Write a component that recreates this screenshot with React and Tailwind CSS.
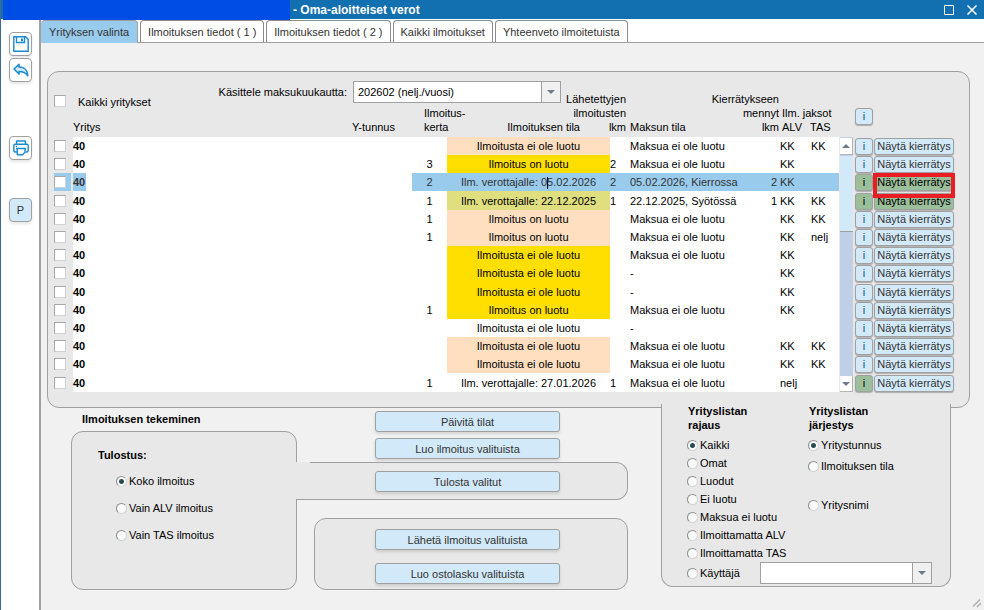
import React from "react";

const none = "Ilmoitusta ei ole luotu";
const made = "Ilmoitus on luotu";
const unpaid = "Maksua ei ole luotu";

const rows = [
  { kerta: "", tila: none, tone: "peach", lkm: "", maksu: unpaid, n: "", alv: "KK", tas: "KK" },
  { kerta: "3", tila: made, tone: "yellow", lkm: "2", maksu: unpaid, n: "", alv: "KK", tas: "" },
  { kerta: "2", tila: "", tone: "selected", lkm: "2", maksu: "05.02.2026, Kierrossa", n: "2", alv: "KK", tas: "", selected: true, info: true, green: true },
  { kerta: "1", tila: "Ilm. verottajalle: 22.12.2025", tone: "olive", lkm: "1", maksu: "22.12.2025, Syötössä", n: "1", alv: "KK", tas: "KK", info: true, green: true },
  { kerta: "1", tila: made, tone: "peach", lkm: "", maksu: unpaid, n: "", alv: "KK", tas: "KK" },
  { kerta: "1", tila: made, tone: "peach", lkm: "", maksu: unpaid, n: "", alv: "KK", tas: "nelj" },
  { kerta: "", tila: none, tone: "yellow", lkm: "", maksu: unpaid, n: "", alv: "KK", tas: "" },
  { kerta: "", tila: none, tone: "yellow", lkm: "", maksu: "-", n: "", alv: "KK", tas: "" },
  { kerta: "", tila: none, tone: "yellow", lkm: "", maksu: "-", n: "", alv: "KK", tas: "" },
  { kerta: "1", tila: made, tone: "yellow", lkm: "", maksu: unpaid, n: "", alv: "KK", tas: "" },
  { kerta: "", tila: none, tone: "plain", lkm: "", maksu: "-", n: "", alv: "", tas: "" },
  { kerta: "", tila: none, tone: "peach", lkm: "", maksu: unpaid, n: "", alv: "KK", tas: "KK" },
  { kerta: "", tila: none, tone: "peach", lkm: "", maksu: unpaid, n: "", alv: "KK", tas: "KK" },
  { kerta: "1", tila: "Ilm. verottajalle: 27.01.2026", tone: "plain", lkm: "1", maksu: unpaid, n: "", alv: "nelj", tas: "", info: true },
];

const tones = {
  peach: "bg-[#ffdfc0]",
  yellow: "bg-[#ffdf00]",
  olive: "bg-[#dfdf80]",
  selected: "bg-[#99cbec]",
  plain: "bg-white",
};

const checkboxStyle =
  "block size-3 appearance-none border border-t-[#a8a8a8] border-l-[#a8a8a8] border-r-[#cfd2da] border-b-[#cfd2da] bg-white checked:bg-[#2a8fd0]";

function Arrow({ up }) {
  return (
    <svg viewBox="0 0 8 4" className="h-1 w-2" aria-hidden="true">
      <path d={up ? "M0 4L4 0L8 4Z" : "M0 0H8L4 4Z"} fill="#6f7b8c" />
    </svg>
  );
}

function Dropdown({ id, label, className, children }) {
  return (
    <div className={`relative ${className}`}>
      <select
        id={id}
        aria-label={label}
        className="block h-[22px] w-full appearance-none border border-[#a0a0a0] bg-white pr-5 pl-1 text-[11px] text-black"
      >
        {children}
      </select>
      <span className="pointer-events-none absolute inset-y-0 right-0 flex w-5 items-center justify-center border border-[#a0a0a0] bg-[#f0f0f0]">
        <Arrow />
      </span>
    </div>
  );
}

function Radio({ name, label, checked, className = "h-[18px]" }) {
  return (
    <label className={`flex items-center gap-[2px] whitespace-nowrap ${className}`}>
      <input
        type="radio"
        name={name}
        defaultChecked={checked}
        className="size-[11px] shrink-0 appearance-none rounded-full border border-t-[#8c8c8c] border-r-[#d4d4d4] border-b-[#d4d4d4] border-l-[#8c8c8c] bg-[#f8fbf9] checked:bg-[radial-gradient(circle,#2b4a55_0_2px,#f8fbf9_3px)]"
      />
      {label}
    </label>
  );
}

function ActionButton({ children }) {
  return (
    <button className="block h-[21px] w-[185px] rounded-[3px] border border-[#a0a0a0] bg-[#d2e9f9] text-center text-[#333] shadow-[0_2px_3px_rgba(0,0,0,0.12)]">
      {children}
    </button>
  );
}

function ToolButton({ label, className = "bg-white", children }) {
  return (
    <button
      aria-label={label}
      className={`flex h-6 w-[23px] items-center justify-center rounded-[4px] border border-[#a0a0a0] text-[#333] shadow-[0_2px_3px_rgba(0,0,0,0.1)] ${className}`}
    >
      {children}
    </button>
  );
}

function Tab({ children, active }) {
  return (
    <button
      className={
        active
          ? "mr-[2px] -mb-px h-[23px] rounded-t-[4px] border-t border-r border-[#a0a0a0] bg-[#99cbec] px-2 whitespace-nowrap text-[#333]"
          : "mr-[2px] h-[22px] rounded-t-[4px] border border-b-0 border-[#8c8c8c] bg-white px-[7px] whitespace-nowrap text-[#333]"
      }
    >
      {children}
    </button>
  );
}

function Sidebar() {
  return (
    <aside className="flex w-[40px] shrink-0 flex-col items-start border-r-2 border-[#a0a0a0] bg-white pt-[13px] pl-2">
      <ToolButton label="Tallenna">
        <svg viewBox="0 0 16 16" className="size-4" fill="none" stroke="#1a8ad2" strokeWidth="1.4">
          <path d="M.8.8H12.600L15.200 3.400V15.200H.8Z" />
          <path d="M3.500 1V6.500H11.500V1" />
          <path d="M9 2.500V5.200" strokeWidth="2" />
        </svg>
      </ToolButton>
      <div className="mt-[2px]">
        <ToolButton label="Kumoa">
          <svg viewBox="0 0 16 14" className="h-[14px] w-4" fill="#cfe9fa" stroke="#1a8ad2" strokeWidth="1.5" strokeLinejoin="round">
            <path d="M1 6L6 1.200V4C11 4 14.800 7 14.800 12.800C13 9.600 10.500 8.400 6 8.400V11Z" />
          </svg>
        </ToolButton>
      </div>
      <div className="mt-[54px]">
        <ToolButton label="Tulosta">
          <svg viewBox="0 0 16 16" className="size-4" fill="none" stroke="#1a8ad2" strokeWidth="1.4" strokeLinejoin="round">
            <path d="M3.600 4V1H12.400V4" />
            <path d="M4 12H2.200Q.8 12 .8 10.500V5.800Q.8 4.300 2.200 4.300H13.800Q15.200 4.300 15.200 5.800V10.500Q15.200 12 13.800 12H12.500" />
            <path d="M3 8.500H13M4.300 8.500V14.800H9.500L12 12.300V8.500M2.800 6.400H4" />
          </svg>
        </ToolButton>
      </div>
      <div className="mt-[38px]">
        <ToolButton label="P" className="bg-[#d2e9f9]">
          P
        </ToolButton>
      </div>
    </aside>
  );
}

function InfoButton({ green }) {
  return (
    <button
      aria-label="Tiedot"
      className={`block h-[17px] w-[18px] rounded-[3px] border border-[#a0a0a0] text-center leading-[15px] shadow-[0_1px_1px_rgba(0,0,0,0.25)] ${
        green ? "bg-[#9bbf9b] text-black" : "bg-[#d2e9f9] text-[#1b4f7a]"
      }`}
    >
      i
    </button>
  );
}

function Scrollbar() {
  return (
    <div className="flex h-[255px] w-[13px] flex-col bg-[#c0cfe8]">
      <button aria-label="Ylös" className="mt-px flex h-[17px] shrink-0 items-center justify-center border-r border-b border-[#b4b4b4] bg-white">
        <Arrow up />
      </button>
      <div className="mt-px h-[76px] shrink-0 border-b border-[#a0a0a0] bg-[#d2e9f9]" />
      <button aria-label="Alas" className="mt-auto flex h-4 shrink-0 items-center justify-center border-r border-b border-[#b4b4b4] bg-white">
        <Arrow />
      </button>
    </div>
  );
}

function CompanyTable() {
  const th = "pb-[3px] text-left align-bottom font-normal whitespace-nowrap";
  return (
    <table className="w-full table-fixed border-collapse leading-[14px]">
      <colgroup>
        <col className="w-[19px]" />
        <col />
        <col className="w-[60px]" />
        <col className="w-[35px]" />
        <col className="w-[163px]" />
        <col className="w-[20px]" />
        <col className="w-[126px]" />
        <col className="w-[23px]" />
        <col className="w-[31px]" />
        <col className="w-[29px]" />
        <col className="w-[16px]" />
        <col className="w-[19px]" />
        <col className="w-[80px]" />
      </colgroup>
      <thead>
        <tr>
          <td colSpan={5} className="p-0">
            <div className="flex h-[37px] items-end">
              <input id="kaikki" type="checkbox" className={`${checkboxStyle} mb-[2px]`} />
              <label htmlFor="kaikki" className="ml-3">
                Kaikki yritykset
              </label>
              <div className="mr-[49px] ml-auto flex h-full items-start gap-[6px] pt-[9px]">
                <label htmlFor="kuukausi" className="leading-[22px]">
                  Käsittele maksukuukautta:
                </label>
                <Dropdown id="kuukausi" className="w-[208px]">
                  <option>202602 (nelj./vuosi)</option>
                </Dropdown>
              </div>
            </div>
          </td>
          <th rowSpan={2} className={th}>
            <div className="flex justify-end pr-1 text-right">
              Lähetettyjen
              <br />
              ilmoitusten
              <br />
              lkm
            </div>
          </th>
          <th rowSpan={2} className={th}>
            Maksun tila
          </th>
          <th rowSpan={2} className={th}>
            <div className="flex justify-end text-right">
              <span>
                Kierrätykseen
                <br />
                mennyt
                <br />
                lkm
              </span>
            </div>
          </th>
          <th rowSpan={2} className={`${th} pl-[3px]`}>
            Ilm. jaksot
            <br />
            ALV
          </th>
          <th rowSpan={2} className={th}>
            TAS
          </th>
          <td rowSpan={2} />
          <td rowSpan={2} className="p-0 pb-3 align-bottom">
            <InfoButton />
          </td>
          <td rowSpan={2} />
        </tr>
        <tr>
          <td />
          <th className={th}>Yritys</th>
          <th className={th}>Y-tunnus</th>
          <th className={`${th} pl-3`}>
            <div className="flex h-[25px] items-end">
              <span>
                Ilmoitus-
                <br />
                kerta
              </span>
            </div>
          </th>
          <th className={`${th} pr-[30px]`}>
            <div className="text-right">Ilmoituksen tila</div>
          </th>
        </tr>
      </thead>
      <tbody>
        {rows.map((r, i) => {
          const bg = r.selected ? "bg-[#99cbec] text-[#333]" : "bg-white";
          const cell = `p-0 whitespace-nowrap ${bg}`;
          return (
            <tr key={i} className={i % 5 === 3 ? "h-[19px]" : "h-[18px]"}>
              <td className="p-0">
                <div className={`mr-[2px] ${r.selected ? "bg-[#99cbec] py-[3px]" : ""}`}>
                  <input type="checkbox" aria-label={`Valitse rivi ${i + 1}`} className={checkboxStyle} />
                </div>
              </td>
              <td className="bg-white p-0 font-bold">
                <span className={r.selected ? "inline-block bg-[#99cbec] py-[2px] pr-px text-[#333]" : ""}>40</span>
              </td>
              <td className="bg-white p-0" />
              <td className={`${cell} text-center`}>{r.kerta}</td>
              <td className={`p-0 text-center whitespace-nowrap ${tones[r.tone]} ${r.selected ? "text-[#333]" : ""}`}>
                {r.selected ? (
                  <>
                    Ilm. verottajalle: 0<span className="-mr-px inline-block h-3 w-px bg-black align-middle" />
                    5.02.2026
                  </>
                ) : (
                  r.tila
                )}
              </td>
              <td className={cell}>{r.lkm}</td>
              <td className={cell}>{r.maksu}</td>
              <td className={`${cell} text-right`}>
                <span className="pr-[2px]">{r.n}</span>
              </td>
              <td className={`${cell} pl-px`}>{r.alv}</td>
              <td className={`${cell} pl-px`}>{r.tas}</td>
              {i === 0 && (
                <td rowSpan={14} className="p-0 pl-px align-top">
                  <Scrollbar />
                </td>
              )}
              <td className="p-0 align-bottom">
                <InfoButton green={r.info} />
              </td>
              <td className="relative p-0 align-bottom">
                <button
                  className={`block h-[17px] w-full rounded-[3px] border border-[#a0a0a0] text-center leading-[15px] whitespace-nowrap shadow-[0_1px_1px_rgba(0,0,0,0.25)] ${
                    r.green ? "bg-[#9bbf9b] text-black" : "bg-[#d2e9f9] text-[#333]"
                  }`}
                >
                  Näytä kierrätys
                </button>
                {r.selected && (
                  <span className="pointer-events-none absolute -inset-x-px top-0 z-10 h-[25px] border-4 border-[#ea1c24]" />
                )}
              </td>
            </tr>
          );
        })}
      </tbody>
    </table>
  );
}

export default function App() {
  return (
    <div className="flex min-h-screen flex-col border-l border-[#3f6496] bg-[#f1f1f1] font-['Liberation_Sans',Arial,sans-serif] text-[11px] leading-[14px] text-black">
      <header className="flex h-[19px] shrink-0 items-center bg-[#126fb0] text-white">
        <div className="relative ml-[2px] h-5 w-[287px] self-start bg-[#004de6]" />
        <h1 className="ml-[3px] text-[12px] font-bold">- Oma-aloitteiset verot</h1>
        <button aria-label="Suurenna" className="ml-auto">
          <svg viewBox="0 0 10 10" className="size-[10px]" fill="none" stroke="#fff">
            <path d="M.5.5H9.500V9.500H.5Z" />
          </svg>
        </button>
        <button aria-label="Sulje" className="mr-[7px] ml-[13px]">
          <svg viewBox="0 0 10 10" className="size-[10px]" fill="none" stroke="#fff" strokeWidth="1.5">
            <path d="M.5.5L9.500 9.500M9.500.5L.5 9.500" />
          </svg>
        </button>
      </header>

      <div className="flex grow">
        <Sidebar />
        <div className="flex min-w-0 grow flex-col">
          <nav className="flex h-6 shrink-0 items-end border-b border-[#a0a0a0] bg-white">
            <Tab active>Yrityksen valinta</Tab>
            <Tab>Ilmoituksen tiedot ( 1 )</Tab>
            <Tab>Ilmoituksen tiedot ( 2 )</Tab>
            <Tab>Kaikki ilmoitukset</Tab>
            <Tab>Yhteenveto ilmoitetuista</Tab>
          </nav>

          <main className="flex grow flex-col pt-7">
            <section className="mr-[14px] ml-[6px] rounded-[12px] border border-[#a0a0a0] bg-[#e8e8e8] pr-[15px] pb-[15px] pl-[6px]">
              <CompanyTable />
            </section>

            <div className="flex items-start pr-[33px] pl-[30px]">
              <section className="w-[226px] shrink-0 pt-1">
                <h2 className="pl-[11px] font-bold">Ilmoituksen tekeminen</h2>
                <fieldset className="mt-[5px] flex h-[159px] flex-col rounded-[12px] border border-[#a0a0a0] bg-[#e8e8e8] pt-4 pl-[26px]">
                  <legend className="float-left h-6 font-bold">Tulostus:</legend>
                  <div className="flex flex-col gap-[9px] pl-[18px]">
                    <Radio name="tulostus" label="Koko ilmoitus" checked />
                    <Radio name="tulostus" label="Vain ALV ilmoitus" />
                    <Radio name="tulostus" label="Vain TAS ilmoitus" />
                  </div>
                </fieldset>
              </section>

              <section className="w-[331px] shrink-0 pt-[3px]">
                <div className="flex flex-col gap-[6px] pl-[78px]">
                  <ActionButton>Päivitä tilat</ActionButton>
                  <ActionButton>Luo ilmoitus valituista</ActionButton>
                </div>
                <div className="relative mt-[3px] -ml-px rounded-r-[12px] border border-l-0 border-[#a0a0a0] bg-[#e8e8e8] pt-2 pb-[7px] pl-[79px] before:absolute before:-top-px before:left-0 before:h-px before:w-[14px] before:bg-[#e8e8e8]">
                  <ActionButton>Tulosta valitut</ActionButton>
                </div>
                <div className="mt-[18px] ml-[17px] flex flex-col gap-[13px] rounded-[12px] border border-[#a0a0a0] bg-[#e8e8e8] pt-[10px] pb-[5px] pl-[60px]">
                  <ActionButton>Lähetä ilmoitus valituista</ActionButton>
                  <ActionButton>Luo ostolasku valituista</ActionButton>
                </div>
              </section>

              <section className="relative -mt-1 ml-auto flex w-[290px] shrink-0 rounded-b-[12px] border border-t-0 border-[#a0a0a0] bg-[#e8e8e8] pb-[2px] pl-[25px]">
                <div role="radiogroup" aria-label="Yrityslistan rajaus" className="w-[121px]">
                  <h2 className="mb-1 pl-px font-bold">
                    Yrityslistan
                    <br />
                    rajaus
                  </h2>
                  <Radio name="rajaus" label="Kaikki" checked />
                  <Radio name="rajaus" label="Omat" />
                  <Radio name="rajaus" label="Luodut" />
                  <Radio name="rajaus" label="Ei luotu" />
                  <Radio name="rajaus" label="Maksua ei luotu" />
                  <Radio name="rajaus" label="Ilmoittamatta ALV" />
                  <Radio name="rajaus" label="Ilmoittamatta TAS" />
                  <div className="flex w-[245px] items-center justify-between">
                    <Radio name="rajaus" label="Käyttäjä" />
                    <Dropdown label="Käyttäjä" className="w-[172px]">
                      <option></option>
                    </Dropdown>
                  </div>
                </div>
                <div role="radiogroup" aria-label="Yrityslistan järjestys">
                  <h2 className="mb-1 pl-px font-bold">
                    Yrityslistan
                    <br />
                    järjestys
                  </h2>
                  <Radio name="jarjestys" label="Yritystunnus" checked />
                  <Radio name="jarjestys" label="Ilmoituksen tila" className="mt-[3px] h-[18px]" />
                  <Radio name="jarjestys" label="Yritysnimi" className="mt-[21px] h-[18px]" />
                </div>
              </section>
            </div>

            <svg viewBox="0 0 10 10" className="mt-auto mr-[2px] mb-[2px] ml-auto size-[10px]" stroke="#b0b0b0" strokeWidth="1.500" aria-hidden="true">
              <path d="M1 8.500L8 1.500M5 9L9 5" />
            </svg>
          </main>
        </div>
      </div>
    </div>
  );
}
